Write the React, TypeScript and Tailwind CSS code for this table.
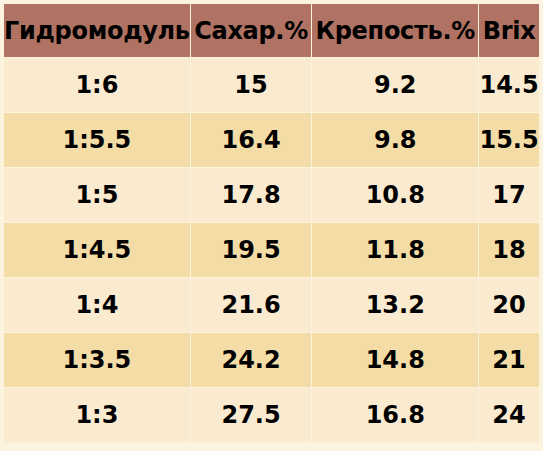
const rows = [
  ["1:6", "15", "9.2", "14.5"],
  ["1:5.5", "16.4", "9.8", "15.5"],
  ["1:5", "17.8", "10.8", "17"],
  ["1:4.5", "19.5", "11.8", "18"],
  ["1:4", "21.6", "13.2", "20"],
  ["1:3.5", "24.2", "14.8", "21"],
  ["1:3", "27.5", "16.8", "24"],
];

const headers = ["Гидромодуль", "Сахар.%", "Крепость.%", "Brix"];

export default function App() {
  return (
    <div className="min-h-screen bg-[#fcf3de] p-[3px] font-['DejaVu_Sans','Verdana',sans-serif]">
      <table className="table-fixed border-separate border-spacing-[1px] text-[24px] font-bold text-black">
        <colgroup>
          <col className="w-[184px]" />
          <col className="w-[122px]" />
          <col className="w-[167px]" />
          <col className="w-[60px]" />
        </colgroup>
        <thead>
          <tr>
            {headers.map((h) => (
              <th
                key={h}
                className="h-[53px] bg-[#b07262] p-0 text-center align-middle whitespace-nowrap tracking-[-0.3px]"
              >
                {h}
              </th>
            ))}
          </tr>
        </thead>
        <tbody>
          {rows.map((row, i) => (
            <tr key={i} className={i % 2 === 0 ? "bg-[#faebd0]" : "bg-[#f3dca6]"}>
              {row.map((cell, j) => (
                <td key={j} className="h-[54px] p-0 text-center align-middle whitespace-nowrap">
                  {cell}
                </td>
              ))}
            </tr>
          ))}
        </tbody>
      </table>
    </div>
  );
}
